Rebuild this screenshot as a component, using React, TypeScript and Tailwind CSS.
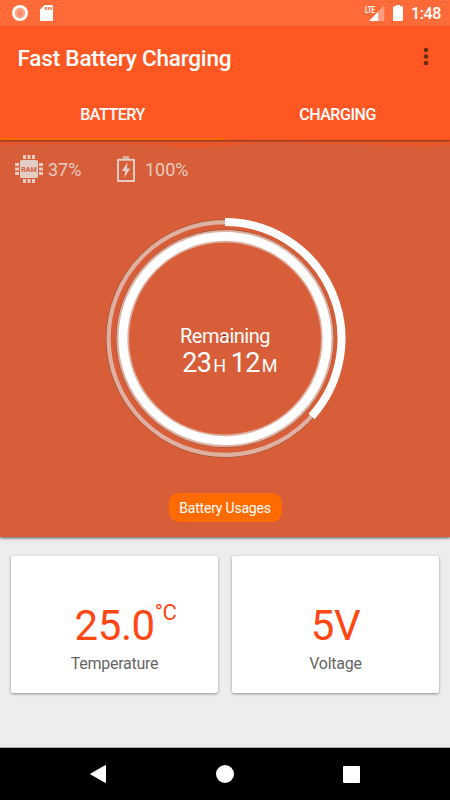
import React from "react";

function StatusBar() {
  return (
    <div className="flex h-[26px] items-center bg-[#ff6a39] pl-[12px] pr-[9px]">
      <svg width="16" height="16" viewBox="0 0 16 16" className="shrink-0">
        <circle cx="8" cy="8" r="8" fill="#fff" />
        <circle cx="8" cy="8" r="5.4" fill="#ffa488" />
        <circle cx="8" cy="8" r="2.6" fill="#ff8b66" />
      </svg>
      <svg width="13" height="16" viewBox="0 0 13 16" className="ml-[11.5px] shrink-0">
        <path d="M4.5 0H12a1 1 0 0 1 1 1v14a1 1 0 0 1-1 1H1a1 1 0 0 1-1-1V4.8z" fill="#fff" />
        <path d="M5 2h1.5v3H5zM7.6 2h1.5v3H7.6zM10.2 2h1.5v3h-1.5z" fill="#ff6a39" />
      </svg>
      <svg width="20" height="16" viewBox="0 0 20 16" className="ml-auto shrink-0">
        <text x="0" y="7.6" fill="#fff" fontSize="9.2" fontWeight="700" textLength="10" lengthAdjust="spacingAndGlyphs">LTE</text>
        <path d="M19.3 .5V16H4z" fill="#fff" opacity=".35" />
        <path d="M13.2 6.7V16H4z" fill="#fff" />
      </svg>
      <svg width="10" height="16" viewBox="0 0 10 16" className="ml-[8.5px] shrink-0">
        <path d="M3 0h4v1.2h2a1 1 0 0 1 1 1V15a1 1 0 0 1-1 1H1a1 1 0 0 1-1-1V2.200a1 1 0 0 1 1-1h2z" fill="#fff" />
      </svg>
      <span className="ml-[8px] mt-[2px] text-[16px] leading-none font-medium tracking-[-0.4px] text-white">1:48</span>
    </div>
  );
}

function RamIcon() {
  return (
    <svg width="28" height="28" viewBox="0 0 28 28" fill="#e3cdc5">
      <path d="M8 0h3v4H8zM12.500 0h3v4h-3zM17 0h3v4h-3zM8 24h3v4H8zM12.500 24h3v4h-3zM17 24h3v4h-3zM0 8h4v3H0zM0 12.500h4v3H0zM0 17h4v3H0zM24 8h4v3h-4zM24 12.500h4v3h-4zM24 17h4v3h-4z" />
      <rect x="5" y="5" width="18" height="18" rx="1.500" />
      <text x="6.300" y="16.700" fontSize="7.500" fontWeight="700" fill="#d75e38" textLength="15.500" lengthAdjust="spacingAndGlyphs">RAM</text>
    </svg>
  );
}

function BatteryIcon() {
  return (
    <svg width="18" height="26" viewBox="0 0 18 26" fill="#e3cdc5">
      <path d="M6 0h6v3H6z" opacity=".7" />
      <path fillRule="evenodd" d="M1 2.700h16a1 1 0 0 1 1 1V25a1 1 0 0 1-1 1H1a1 1 0 0 1-1-1V3.700a1 1 0 0 1 1-1zM2 4.700V24h14V4.700z" />
      <path d="M10.500 6.500 4.800 15h3.400l-1 7 6-9.500H10z" />
    </svg>
  );
}

function Gauge() {
  return (
    <div className="relative h-[242px] w-[242px]">
      <svg width="242" height="242" viewBox="-121 -121.500 242 242" fill="none">
        <circle r="118.700" stroke="#704c32" strokeWidth=".6" />
        <circle r="116.400" stroke="#dfb0a1" strokeWidth="4.200" />
        <circle r="108.700" stroke="#704c32" strokeWidth=".6" />
        <circle r="102.300" stroke="#dfb0a1" strokeWidth="12.600" />
        <circle r="102.100" stroke="#fff" strokeWidth="8.800" />
        <path d="M0-116.500A116.500 116.500 0 0 1 86.580 77.950" stroke="#fff" strokeWidth="8" />
        <circle cx="-.5" cy="-2" r="1.300" stroke="#4a2015" />
        <circle cx="3.500" cy="1.500" r="1.300" stroke="#4a2015" />
      </svg>
      <div className="absolute inset-0 flex flex-col items-center whitespace-nowrap text-white">
        <span className="mt-[107px] text-[20px] leading-[24px] tracking-[-0.5px]">Remaining</span>
        <span className="ml-[9px] text-[27px] leading-[30px] tracking-[-0.7px]">
          23<span className="ml-[2px] text-[18px]">H</span>
          <span className="ml-[5.500px]">12</span>
          <span className="ml-[2px] text-[18px]">M</span>
        </span>
      </div>
    </div>
  );
}

function Card({ children, label }: { children: React.ReactNode; label: string }) {
  return (
    <section className="flex h-[137px] flex-1 flex-col items-center rounded-[2px] bg-white pt-[46px] shadow-[0_1px_3px_rgba(0,0,0,.4)]">
      <div className="flex h-[48px] items-start text-[42px] leading-[48px] tracking-[-0.4px] text-[#ff4713]">{children}</div>
      <span className="mt-[4px] text-[16px] leading-[20px] tracking-[-0.25px] text-[#666]">{label}</span>
    </section>
  );
}

export default function App() {
  return (
    <div className="flex h-[800px] w-[450px] flex-col overflow-hidden bg-[#ededed] font-['Roboto',sans-serif]">
      <StatusBar />
      <header className="z-10 flex h-[114px] flex-col bg-[#ff5722] text-white shadow-[0_1px_2px_rgba(0,0,0,.5)]">
        <div className="flex h-[62px] items-center justify-between pl-[17.500px] pr-[21px]">
          <h1 className="mt-[3px] text-[22.500px] leading-none font-medium tracking-[-0.19px]">Fast Battery Charging</h1>
          <svg width="6" height="20" viewBox="0 0 6 20" fill="#702b17">
            <circle cx="3" cy="3" r="2.300" />
            <circle cx="3" cy="9.500" r="2.300" />
            <circle cx="3" cy="16" r="2.300" />
          </svg>
        </div>
        <nav className="grid flex-1 grid-cols-2 text-center text-[16px] font-medium tracking-[-0.45px]">
          <div className="border-b-2 border-[#ff6d00] pt-[15px]">BATTERY</div>
          <div className="pt-[15px]">CHARGING</div>
        </nav>
      </header>
      <main className="flex h-[397px] flex-col items-center bg-[#d75e38] shadow-[0_1px_3px_rgba(0,0,0,.65)]">
        <svg width="450" height="8" viewBox="0 0 450 8" className="shrink-0">
          <path d="M0 0H450V5Q425 8 395 6T335 4T285 3T225 6T175 7T110 4T55 4T0 5Z" fill="#eb582b" />
        </svg>
        <div className="flex h-[42px] w-full items-center pl-[15px] text-[18px] text-[#e6cbc1]">
          <RamIcon />
          <span className="ml-[5px] w-[69px]">37%</span>
          <BatteryIcon />
          <span className="ml-[10px]">100%</span>
        </div>
        <div className="mt-[27px]"><Gauge /></div>
        <button className="mt-[34px] h-[29px] w-[113px] shrink-0 rounded-[10px] bg-[#ff6b00] pt-[2px] text-[14px] tracking-[-0.2px] text-white">Battery Usages</button>
      </main>
      <div className="mt-[19px] flex gap-[14px] px-[11px]">
        <Card label="Temperature">
          <span className="ml-[22px]">25.0</span>
          <span className="text-[22px] leading-[21px]">°C</span>
        </Card>
        <Card label="Voltage">5V</Card>
      </div>
      <footer className="mt-auto flex h-[53px] items-center border-t border-[#aaa] bg-black pl-[90px]">
        <svg width="16" height="18" viewBox="0 0 16 18"><path d="M15.500 .5v17L.7 9z" fill="#fff" stroke="#fff" strokeLinejoin="round" /></svg>
        <div className="ml-[110px] h-[18px] w-[18px] rounded-full bg-white" />
        <div className="ml-[109px] h-[17px] w-[17px] rounded-[1px] bg-white" />
      </footer>
    </div>
  );
}
